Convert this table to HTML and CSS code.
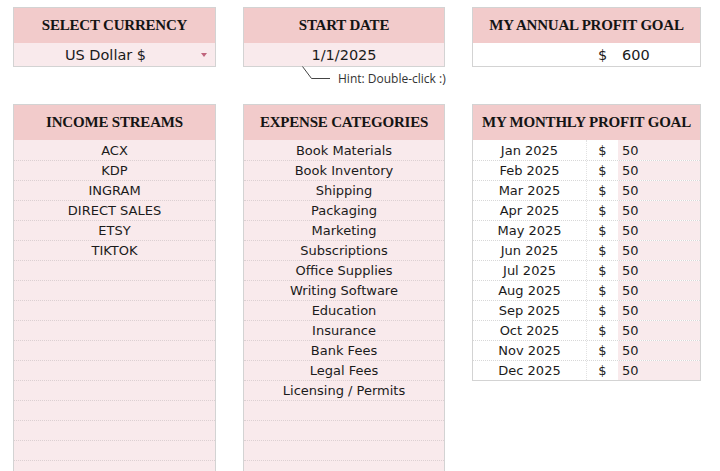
FILE: index.html
```html
<!DOCTYPE html>
<html>
<head>
<meta charset="utf-8">
<link rel="stylesheet" href="styles.css">
</head>
<body>
<div class="page">
  <div class="top">
    <div class="col">
      <div class="card">
        <div class="head">SELECT CURRENCY</div>
        <div class="cell pink select">US Dollar $<span class="arrow"></span></div>
      </div>
    </div>
    <div class="col">
      <div class="card">
        <div class="head">START DATE</div>
        <div class="cell pink">1/1/2025</div>
      </div>
      <div class="hint">
        <svg class="hint-line" width="30" height="14" viewBox="0 0 30 14"><path d="M0.5 0.5 L9.5 12.5 L28 12.5" fill="none" stroke="#444" stroke-width="1"/></svg>
        <span>Hint: Double-click :)</span>
      </div>
    </div>
    <div class="col">
      <div class="card">
        <div class="head">MY ANNUAL PROFIT GOAL</div>
        <div class="money white">
          <span></span><span class="cur">$</span><span class="val">600</span>
        </div>
      </div>
    </div>
  </div>

  <div class="bottom">
    <div class="card tall">
      <div class="head">INCOME STREAMS</div>
      <div class="list">
        <div class="row">ACX</div>
        <div class="row">KDP</div>
        <div class="row">INGRAM</div>
        <div class="row">DIRECT SALES</div>
        <div class="row">ETSY</div>
        <div class="row">TIKTOK</div>
        <div class="row"></div><div class="row"></div><div class="row"></div><div class="row"></div>
        <div class="row"></div><div class="row"></div><div class="row"></div><div class="row"></div>
        <div class="row"></div><div class="row"></div><div class="row"></div>
      </div>
    </div>
    <div class="card tall">
      <div class="head">EXPENSE CATEGORIES</div>
      <div class="list">
        <div class="row">Book Materials</div>
        <div class="row">Book Inventory</div>
        <div class="row">Shipping</div>
        <div class="row">Packaging</div>
        <div class="row">Marketing</div>
        <div class="row">Subscriptions</div>
        <div class="row">Office Supplies</div>
        <div class="row">Writing Software</div>
        <div class="row">Education</div>
        <div class="row">Insurance</div>
        <div class="row">Bank Fees</div>
        <div class="row">Legal Fees</div>
        <div class="row">Licensing / Permits</div>
        <div class="row"></div><div class="row"></div><div class="row"></div><div class="row"></div>
      </div>
    </div>
    <div class="card">
      <div class="head">MY MONTHLY PROFIT GOAL</div>
      <div class="mlist">
        <div class="mrow"><span class="m">Jan 2025</span><span class="cur">$</span><span class="val">50</span></div>
        <div class="mrow"><span class="m">Feb 2025</span><span class="cur">$</span><span class="val">50</span></div>
        <div class="mrow"><span class="m">Mar 2025</span><span class="cur">$</span><span class="val">50</span></div>
        <div class="mrow"><span class="m">Apr 2025</span><span class="cur">$</span><span class="val">50</span></div>
        <div class="mrow"><span class="m">May 2025</span><span class="cur">$</span><span class="val">50</span></div>
        <div class="mrow"><span class="m">Jun 2025</span><span class="cur">$</span><span class="val">50</span></div>
        <div class="mrow"><span class="m">Jul 2025</span><span class="cur">$</span><span class="val">50</span></div>
        <div class="mrow"><span class="m">Aug 2025</span><span class="cur">$</span><span class="val">50</span></div>
        <div class="mrow"><span class="m">Sep 2025</span><span class="cur">$</span><span class="val">50</span></div>
        <div class="mrow"><span class="m">Oct 2025</span><span class="cur">$</span><span class="val">50</span></div>
        <div class="mrow"><span class="m">Nov 2025</span><span class="cur">$</span><span class="val">50</span></div>
        <div class="mrow"><span class="m">Dec 2025</span><span class="cur">$</span><span class="val">50</span></div>
      </div>
    </div>
  </div>
</div>
</body>
</html>
```
FILE: styles.css
```css
html, body {
  margin: 0;
  padding: 0;
  background: #ffffff;
  overflow: hidden;
}
.page {
  width: 720px;
  height: 471px;
  overflow: hidden;
  box-sizing: border-box;
  padding: 7px 0 0 13px;
  font-family: "DejaVu Sans", "Open Sans", sans-serif;
  color: #1b1b1b;
}
.top, .bottom {
  display: grid;
  grid-template-columns: 203px 202px 229px;
  column-gap: 27px;
  align-items: start;
}
.top {
  height: 97px;
}
.card {
  border: 1.5px solid #d3d3d3;
  background: #fff;
}
.head {
  height: 35px;
  background: #f2cbcb;
  display: flex;
  align-items: center;
  justify-content: center;
  font-family: "Liberation Serif", "Times New Roman", serif;
  font-weight: bold;
  font-size: 15px;
  letter-spacing: -0.2px;
  color: #141414;
  white-space: nowrap;
}
.cell {
  height: 23px;
  display: flex;
  align-items: center;
  justify-content: center;
  font-size: 14.5px;
  position: relative;
}
.select { padding-right: 18px; }
.pink { background: #f9eaec; }
.white { background: #fff; }
.arrow {
  position: absolute;
  right: 8px;
  top: 10px;
  width: 0;
  height: 0;
  border-left: 3.5px solid transparent;
  border-right: 3.5px solid transparent;
  border-top: 4px solid #c0647c;
}
.money {
  height: 23px;
  display: grid;
  grid-template-columns: 114px 31px 1fr;
  align-items: center;
  font-size: 14.5px;
}
.money .cur { text-align: center; }
.money .val { padding-left: 4px; }
.hint {
  display: flex;
  align-items: flex-end;
  margin: -1px 0 0 59px;
  font-family: "Open Sans", sans-serif;
  font-size: 12px;
  color: #333;
  white-space: nowrap;
}
.hint-line { display: block; flex: none; }
.hint span { margin-left: 6px; line-height: 14px; position: relative; top: 6px; }
.list .row {
  height: 20px;
  box-sizing: border-box;
  background: #f9eaec;
  border-top: 1px dotted #dcd0d2;
  display: flex;
  align-items: center;
  justify-content: center;
  font-size: 13px;
}
.list .row:first-child { border-top: none; }
.mlist .mrow {
  height: 20px;
  box-sizing: border-box;
  border-top: 1px dotted #d8d8d8;
  display: grid;
  grid-template-columns: 114px 31px 1fr;
  font-size: 13px;
}
.mlist .mrow:first-child { border-top: none; }
.mrow span { display: flex; align-items: center; }
.mrow .m { justify-content: center; border-right: 1px dotted #e2e2e2; }
.mrow .cur { justify-content: center; }
.mrow .val { background: #f9eaec; padding-left: 4px; }
```
